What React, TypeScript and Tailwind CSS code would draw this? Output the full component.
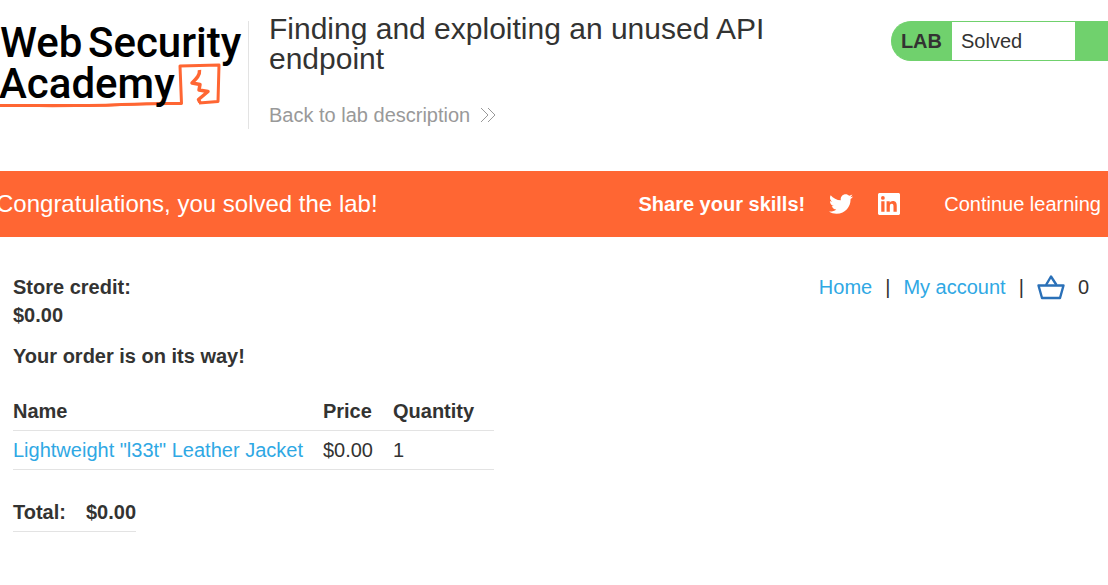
import React from 'react';
import { FaTwitter } from 'react-icons/fa';

interface OrderItem {
  id: number;
  name: string;
  price: string;
  quantity: number;
}

const orderItems: OrderItem[] = [
  {
    id: 1,
    name: 'Lightweight "l33t" Leather Jacket',
    price: '$0.00',
    quantity: 1
  }
];

const Logo: React.FC = () => (
  <svg width="248" height="108" viewBox="0 0 248 108" role="img" aria-label="Web Security Academy">
    <g fill="none" stroke="#ff6633" strokeLinejoin="round">
      <path d="M0 84.500 C40 84.500 85 85 110 84 S150 82 181.500 82.500 L180 45 L219 44 L218 80.500 L199 82" strokeWidth="3" />
      <path d="M0 84 C40 86 80 85 100 84.500 S140 83 160 83" strokeWidth="2" />
      <path d="M199.500 49 C200 54 197 57 192 62 L200 63.500 L199 69 L208 70.500 L198.500 78.500 L200 81.500" strokeWidth="3.500" />
    </g>
    <g fontFamily="Roboto, 'Liberation Sans', sans-serif" fontWeight="500" fontSize="42" fill="#000">
      <text x="0" y="36">Web</text>
      <text x="88" y="36">Security</text>
      <text x="-1" y="77">Academy</text>
    </g>
  </svg>
);

const Chevrons: React.FC = () => (
  <svg className="shrink-0" width="16" height="16" viewBox="0 0 16 16" fill="none" stroke="currentColor" aria-hidden="true">
    <path d="M1 1l7 7-7 7M8 1l7 7-7 7" />
  </svg>
);

const LinkedinIcon: React.FC = () => (
  <svg width="22" height="22" viewBox="0 0 24 24" fill="currentColor" aria-hidden="true">
    <path d="M20.447 20.452h-3.554v-5.569c0-1.328-.027-3.037-1.852-3.037-1.853 0-2.136 1.445-2.136 2.939v5.667H9.351V9h3.414v1.561h.046c.477-.9 1.637-1.850 3.370-1.850 3.601 0 4.267 2.370 4.267 5.455v6.286zM5.337 7.433a2.062 2.062 0 0 1-2.063-2.065 2.064 2.064 0 1 1 2.063 2.065zm1.782 13.019H3.555V9h3.564v11.452zM22.225 0H1.771C.792 0 0 .774 0 1.729v20.542C0 23.227.792 24 1.771 24h20.451C23.200 24 24 23.227 24 22.271V1.729C24 .774 23.200 0 22.222 0h.003z" />
  </svg>
);

const BasketIcon: React.FC = () => (
  <svg width="28" height="26" viewBox="0 0 28 26" fill="none" stroke="#2a70b8" strokeWidth="2.400" strokeLinejoin="round">
    <path d="M1.500 11.500h25l-3.500 12.500H5z" />
    <path d="M9 11l5-8.500 5.500 8.500" />
  </svg>
);

const Header: React.FC = () => (
  <header className="flex items-start justify-between pb-[42px]">
    <div className="flex items-start">
      <div className="mt-[21px] h-[108px] shrink-0 border-r border-[#e3e3e3]">
        <Logo />
      </div>
      <div className="ml-5 mt-3.5 max-w-[510px]">
        <h1 className="text-[30px] leading-[30px]">Finding and exploiting an unused API endpoint</h1>
        <a href="#lab" className="mt-[29px] flex items-center gap-2.5 text-[20px] leading-6 text-[#999]">
          Back to lab description
          <Chevrons />
        </a>
      </div>
    </div>
    <div className="mt-[21px] flex h-10 shrink-0 overflow-hidden rounded-l-[20px] border border-r-0 border-[#70d16d] bg-[#70d16d] text-[20px] leading-[38px]">
      <span className="pl-[9px] pr-2.5 font-bold">LAB</span>
      <p className="w-[123px] bg-white pl-[9px]">Solved</p>
      <span className="w-[33px]" />
    </div>
  </header>
);

const SolvedBanner: React.FC = () => (
  <section className="flex h-[66px] items-center justify-between bg-[#ff6633] text-white">
    <h2 className="-ml-1 text-2xl">Congratulations, you solved the lab!</h2>
    <div className="-mr-4 flex shrink-0 items-center text-[20px]">
      <span className="mr-6 font-bold">Share your skills!</span>
      <a href="#twitter" aria-label="Share on Twitter" className="mr-[25px]">
        <FaTwitter size={24} />
      </a>
      <a href="#linkedin" aria-label="Share on LinkedIn" className="mr-11">
        <LinkedinIcon />
      </a>
      <a href="#learning" className="flex items-center gap-[7px]">
        Continue learning
        <Chevrons />
      </a>
    </div>
  </section>
);

const Order: React.FC = () => (
  <main className="px-[13px] pt-9 text-[20px] leading-7">
    <div className="flex items-start justify-between">
      <p className="font-bold">
        Store credit:
        <br />
        $0.00
      </p>
      <nav className="mr-1.5 flex items-center gap-[13px]">
        <a href="#home" className="text-[#2fa8e4]">Home</a>
        <span>|</span>
        <a href="#account" className="text-[#2fa8e4]">My account</a>
        <span>|</span>
        <a href="#cart" aria-label="Basket">
          <BasketIcon />
        </a>
        <span>0</span>
      </nav>
    </div>
    <p className="mt-[13px] font-bold">Your order is on its way!</p>

    <table className="mt-[22px] text-left">
      <thead>
        <tr className="border-b border-[#e3e3e3]">
          <th className="py-[5px] pr-5">Name</th>
          <th className="py-[5px] pr-5">Price</th>
          <th className="py-[5px] pr-5">Quantity</th>
        </tr>
      </thead>
      <tbody>
        {orderItems.map((item) => (
          <tr key={item.id} className="border-b border-[#e3e3e3]">
            <td className="py-[5px] pr-5">
              <a href="#product" className="text-[#2fa8e4]">{item.name}</a>
            </td>
            <td className="py-[5px] pr-5">{item.price}</td>
            <td className="py-[5px] pr-5">{item.quantity}</td>
          </tr>
        ))}
      </tbody>
    </table>

    <table className="mt-[23px] text-left">
      <tbody>
        <tr className="border-b border-[#e3e3e3]">
          <th className="py-[5px] pr-5">Total:</th>
          <th className="py-[5px]">$0.00</th>
        </tr>
      </tbody>
    </table>
  </main>
);

const App: React.FC = () => {
  return (
    <div className="overflow-hidden bg-white font-['Liberation_Sans',Arial,sans-serif] text-[#333332]">
      <Header />
      <SolvedBanner />
      <Order />
    </div>
  );
};

export default App;
